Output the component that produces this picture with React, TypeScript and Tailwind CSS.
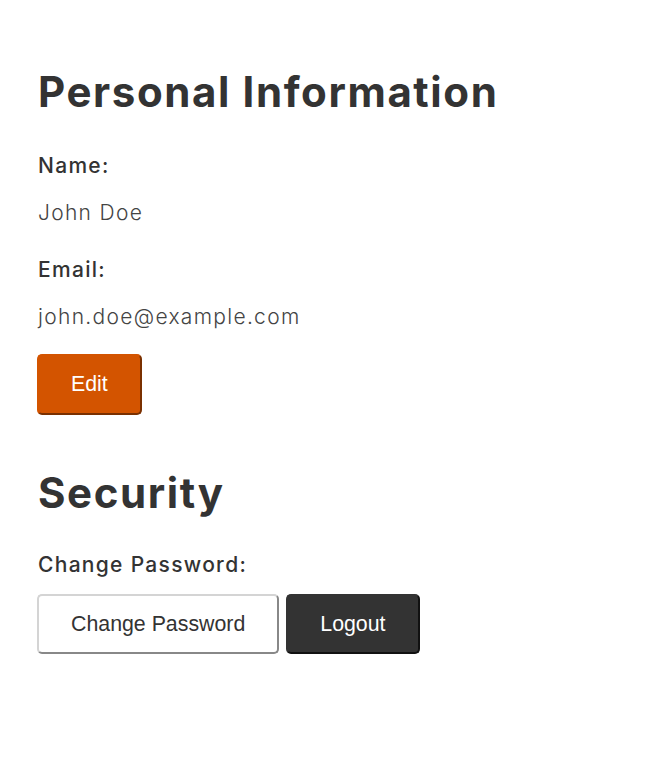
const headingFont = "font-['Inter','Noto_Sans',sans-serif]";
const btnBase =
  "font-['Liberation_Sans',Arial,sans-serif] text-[21.33px] leading-[24.5px] px-[32px] py-[16px] border-2 rounded-[5px] tracking-normal";

const Field = ({ label, value }: { label: string; value: string }) => (
  <div>
    <div className="text-[21px] font-medium text-[#333] leading-[32px] tracking-[1.3px]">{label}</div>
    <div className="mt-[15px] text-[21px] font-light text-[#444] leading-[32px] tracking-[1.3px]">{value}</div>
  </div>
);

const App = () => {
  return (
    <div className={`min-h-screen bg-white px-[38px] pt-[66px] ${headingFont}`}>
      <h2 className="text-[42px] font-bold text-[#333] leading-[52px] tracking-[1.6px]">
        Personal Information
      </h2>
      <div className="mt-[32px] space-y-[25px]">
        <Field label="Name:" value="John Doe" />
        <Field label="Email:" value="john.doe@example.com" />
      </div>
      <button
        className={`${btnBase} mt-[21px] -ml-px bg-[#d35400] text-white border-t-[#d35400] border-l-[#d35400] border-b-[#7a3000] border-r-[#7a3000]`}
      >
        Edit
      </button>

      <h2 className="mt-[52px] text-[42px] font-bold text-[#333] leading-[52px] tracking-[1.6px]">
        Security
      </h2>
      <div className="mt-[30px] text-[21px] font-medium text-[#333] leading-[32px] tracking-[1.3px]">
        Change Password:
      </div>
      <div className="mt-[13px] -ml-px flex gap-[7px]">
        <button
          className={`${btnBase} bg-white text-[#333] border-t-[#d4d4d4] border-l-[#d4d4d4] border-b-[#888] border-r-[#888]`}
        >
          Change Password
        </button>
        <button
          className={`${btnBase} bg-[#333] text-white border-t-[#333] border-l-[#333] border-b-[#111] border-r-[#111]`}
        >
          Logout
        </button>
      </div>
    </div>
  );
};

export default App;
